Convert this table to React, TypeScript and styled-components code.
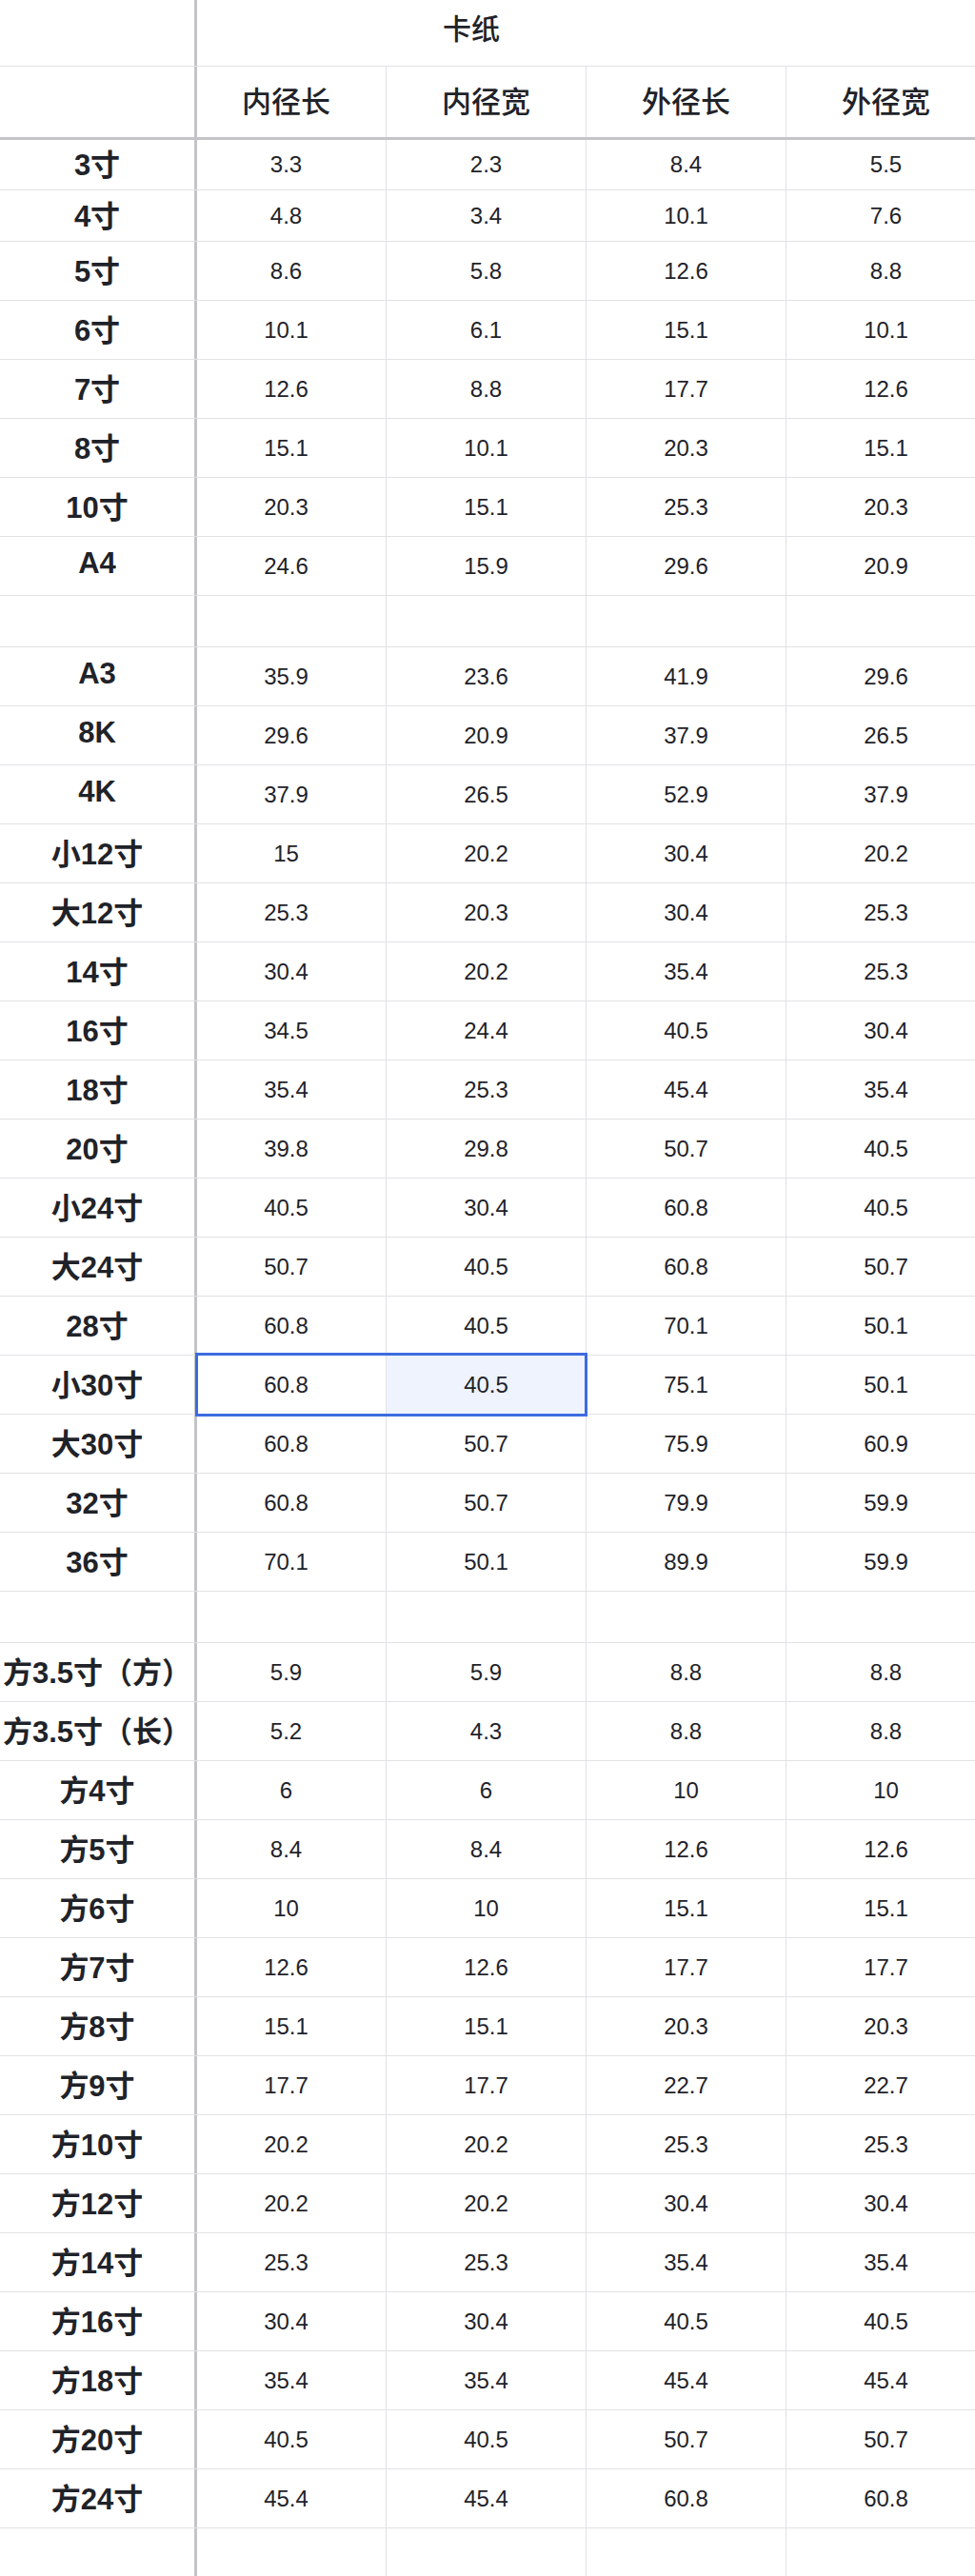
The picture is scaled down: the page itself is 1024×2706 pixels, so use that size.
import React from "react";
import styled, { createGlobalStyle } from "styled-components";

const GlobalStyle = createGlobalStyle`
  html, body {
    margin: 0;
    padding: 0;
    background: #ffffff;
  }
  body {
    font-family: "Liberation Sans", "Noto Sans CJK SC", sans-serif;
    color: #1f2329;
  }
`;

const GRID = "#e1e2e5";
const FROZEN = "#c2c4c8";

const Sheet = styled.div`
  width: 1024px;
  height: 2706px;
  overflow: hidden;
  background: #fff;
`;

const Row = styled.div<{ $h: number; $thick?: boolean }>`
  position: relative;
  display: flex;
  height: ${(p) => p.$h}px;
  box-sizing: border-box;
  border-bottom: ${(p) => (p.$thick ? `3px solid ${FROZEN}` : `1px solid ${GRID}`)};
`;

const Frozen = styled.div`
  flex: none;
  width: 207px;
  box-sizing: border-box;
  border-right: 3px solid ${FROZEN};
  display: flex;
  align-items: center;
  justify-content: center;
  padding-bottom: 5px;
  overflow: hidden;
  white-space: nowrap;
  font-size: 31px;
  font-weight: 700;
  color: #1f2329;
`;

const Track = styled.div`
  flex: 1;
  min-width: 0;
  overflow: hidden;
  display: flex;
`;

const Scrolled = styled.div`
  display: flex;
  flex: none;
  margin-left: -11px;
`;

const Cell = styled.div<{ $selected?: boolean; $head?: boolean }>`
  flex: none;
  width: 210px;
  box-sizing: border-box;
  border-right: 1px solid ${GRID};
  display: flex;
  align-items: center;
  justify-content: center;
  padding-bottom: ${(p) => (p.$head ? "5px" : "0")};
  background: ${(p) => (p.$selected ? "#eef3fe" : "transparent")};
  font-size: ${(p) => (p.$head ? "31px" : "24px")};
  font-weight: ${(p) => (p.$head ? 500 : 400)};
  color: #1f2329;
  white-space: nowrap;
`;

const MergedTitle = styled.div`
  flex: 1;
  display: flex;
  align-items: center;
  justify-content: flex-start;
  padding-left: 258px;
  padding-bottom: 14px;
  font-size: 30px;
  font-weight: 500;
  color: #1f2329;
`;

const Selection = styled.div`
  position: absolute;
  left: 205px;
  top: -3px;
  width: 412px;
  height: 67px;
  box-sizing: border-box;
  border: 3px solid #3d6ce0;
  z-index: 2;
  pointer-events: none;
`;

type DataRow = { label: string; values: string[]; h: number; selected?: boolean };

const E = (h: number): DataRow => ({ label: "", values: ["", "", "", ""], h });
const R = (label: string, a: string, b: string, c: string, d: string, h = 62): DataRow => ({
  label,
  values: [a, b, c, d],
  h,
});

const rows: DataRow[] = [
  R("3寸", "3.3", "2.3", "8.4", "5.5", 53),
  R("4寸", "4.8", "3.4", "10.1", "7.6", 54),
  R("5寸", "8.6", "5.8", "12.6", "8.8"),
  R("6寸", "10.1", "6.1", "15.1", "10.1"),
  R("7寸", "12.6", "8.8", "17.7", "12.6"),
  R("8寸", "15.1", "10.1", "20.3", "15.1"),
  R("10寸", "20.3", "15.1", "25.3", "20.3"),
  R("A4", "24.6", "15.9", "29.6", "20.9"),
  E(54),
  R("A3", "35.9", "23.6", "41.9", "29.6"),
  R("8K", "29.6", "20.9", "37.9", "26.5"),
  R("4K", "37.9", "26.5", "52.9", "37.9"),
  R("小12寸", "15", "20.2", "30.4", "20.2"),
  R("大12寸", "25.3", "20.3", "30.4", "25.3"),
  R("14寸", "30.4", "20.2", "35.4", "25.3"),
  R("16寸", "34.5", "24.4", "40.5", "30.4"),
  R("18寸", "35.4", "25.3", "45.4", "35.4"),
  R("20寸", "39.8", "29.8", "50.7", "40.5"),
  R("小24寸", "40.5", "30.4", "60.8", "40.5"),
  R("大24寸", "50.7", "40.5", "60.8", "50.7"),
  R("28寸", "60.8", "40.5", "70.1", "50.1"),
  { ...R("小30寸", "60.8", "40.5", "75.1", "50.1"), selected: true },
  R("大30寸", "60.8", "50.7", "75.9", "60.9"),
  R("32寸", "60.8", "50.7", "79.9", "59.9"),
  R("36寸", "70.1", "50.1", "89.9", "59.9"),
  E(54),
  R("方3.5寸（方）", "5.9", "5.9", "8.8", "8.8"),
  R("方3.5寸（长）", "5.2", "4.3", "8.8", "8.8"),
  R("方4寸", "6", "6", "10", "10"),
  R("方5寸", "8.4", "8.4", "12.6", "12.6"),
  R("方6寸", "10", "10", "15.1", "15.1"),
  R("方7寸", "12.6", "12.6", "17.7", "17.7"),
  R("方8寸", "15.1", "15.1", "20.3", "20.3"),
  R("方9寸", "17.7", "17.7", "22.7", "22.7"),
  R("方10寸", "20.2", "20.2", "25.3", "25.3"),
  R("方12寸", "20.2", "20.2", "30.4", "30.4"),
  R("方14寸", "25.3", "25.3", "35.4", "35.4"),
  R("方16寸", "30.4", "30.4", "40.5", "40.5"),
  R("方18寸", "35.4", "35.4", "45.4", "45.4"),
  R("方20寸", "40.5", "40.5", "50.7", "50.7"),
  R("方24寸", "45.4", "45.4", "60.8", "60.8"),
  E(62),
];

const headers = ["内径长", "内径宽", "外径长", "外径宽"];

export default function App() {
  return (
    <>
      <GlobalStyle />
      <Sheet>
        <Row $h={70}>
          <Frozen />
          <Track>
            <MergedTitle>卡纸</MergedTitle>
          </Track>
        </Row>
        <Row $h={77} $thick>
          <Frozen />
          <Track>
            <Scrolled>
              {headers.map((h) => (
                <Cell key={h} $head>
                  {h}
                </Cell>
              ))}
            </Scrolled>
          </Track>
        </Row>
        {rows.map((r, i) => (
          <Row key={i} $h={r.h}>
            <Frozen>{r.label}</Frozen>
            <Track>
              <Scrolled>
                {r.values.map((v, j) => (
                  <Cell key={j} $selected={r.selected && j === 1}>
                    {v}
                  </Cell>
                ))}
              </Scrolled>
            </Track>
            {r.selected && <Selection />}
          </Row>
        ))}
      </Sheet>
    </>
  );
}
